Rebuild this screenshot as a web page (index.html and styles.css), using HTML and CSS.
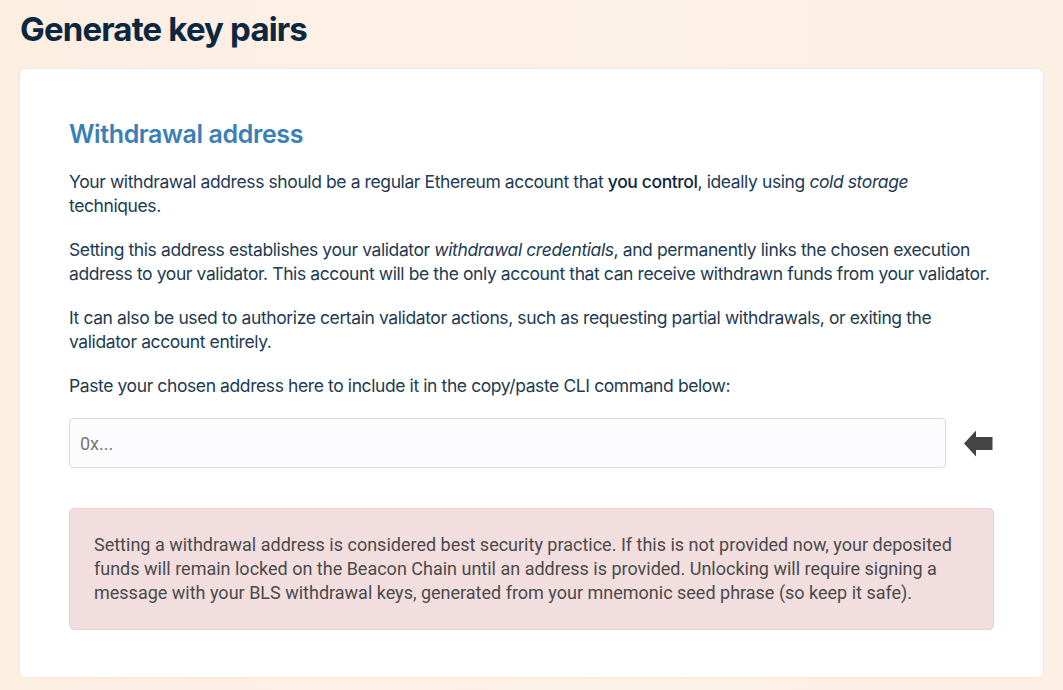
FILE: index.html
```html
<!DOCTYPE html>
<html lang="en">
<head>
<meta charset="utf-8">
<title>Generate key pairs</title>
<link rel="stylesheet" href="styles.css">
</head>
<body>
<div class="page">
  <h1 class="page-title">Generate key pairs</h1>
  <section class="card">
    <h2 class="section-title">Withdrawal address</h2>
    <p class="text">Your withdrawal address should be a regular Ethereum account that <strong>you control</strong>, ideally using <em>cold storage</em> techniques.</p>
    <p class="text">Setting this address establishes your validator <em>withdrawal credentials</em>, and permanently links the chosen execution address to your validator. This account will be the only account that can receive withdrawn funds from your validator.</p>
    <p class="text">It can also be used to authorize certain validator actions, such as requesting partial withdrawals, or exiting the validator account entirely.</p>
    <p class="text">Paste your chosen address here to include it in the copy/paste CLI command below:</p>
    <div class="input-row">
      <input class="address-input" type="text" placeholder="0x...">
      <svg class="arrow" width="29" height="27" viewBox="0 0 29 27" aria-hidden="true">
        <path d="M0 13.5 L12 0.5 L12 7 L28.5 7 L28.5 20 L12 20 L12 26.5 Z" fill="#444"/>
      </svg>
    </div>
    <div class="alert">Setting a withdrawal address is considered best security practice. If this is not provided now, your deposited funds will remain locked on the Beacon Chain until an address is provided. Unlocking will require signing a message with your BLS withdrawal keys, generated from your mnemonic seed phrase (so keep it safe).</div>
  </section>
</div>
</body>
</html>
```

FILE: styles.css
```css
html, body {
  margin: 0;
  padding: 0;
}
body {
  background: linear-gradient(90deg, #fdeee2 0%, #fcf1e6 60%, #fcefe3 100%);
  font-family: Inter, "Noto Sans", sans-serif;
  color: #1f3449;
  width: 1063px;
  height: 690px;
  overflow: hidden;
}
.page {
  padding: 0 20px;
}
.page-title {
  margin: 0;
  padding: 9px 0 0;
  height: 60px;
  box-sizing: border-box;
  font-size: 33px;
  font-weight: 700;
  color: #0c2740;
  letter-spacing: -0.85px;
}
.card {
  margin-top: 9px;
  background: #fff;
  border-radius: 5px;
  box-shadow: 0 0 3px rgba(0, 0, 0, 0.08);
  padding: 48px 49px 49px;
  height: 608px;
  box-sizing: border-box;
}
.section-title {
  margin: 0 0 19px;
  font-size: 25px;
  font-weight: 600;
  color: #3a80b6;
  line-height: 34px;
  letter-spacing: -0.4px;
}
.text {
  margin: 0 0 20px;
  font-size: 17.5px;
  line-height: 24px;
  color: #223a52;
  letter-spacing: -0.4px;
}
.text strong {
  font-weight: 500;
  color: #0c2740;
}
.text em {
  font-style: italic;
}
.input-row {
  display: flex;
  align-items: center;
  gap: 18px;
  margin-top: 7px;
}
.address-input {
  flex: 1;
  height: 50px;
  box-sizing: border-box;
  border: 1px solid #dcdcdf;
  border-radius: 4px;
  background: #fcfcfe;
  padding: 0 10px;
  font-family: Roboto, sans-serif;
  font-size: 18px;
  color: #333;
  outline: none;
}
.address-input::placeholder {
  color: #757575;
}
.arrow {
  flex: none;
  margin-right: 1px;
}
.alert {
  margin-top: 40px;
  background: #f2dddf;
  border: 1px solid #ebcfd2;
  border-radius: 5px;
  padding: 24px 24px 24px;
  font-family: Roboto, sans-serif;
  font-size: 18px;
  line-height: 24px;
  color: #4a4a4a;
}
```
